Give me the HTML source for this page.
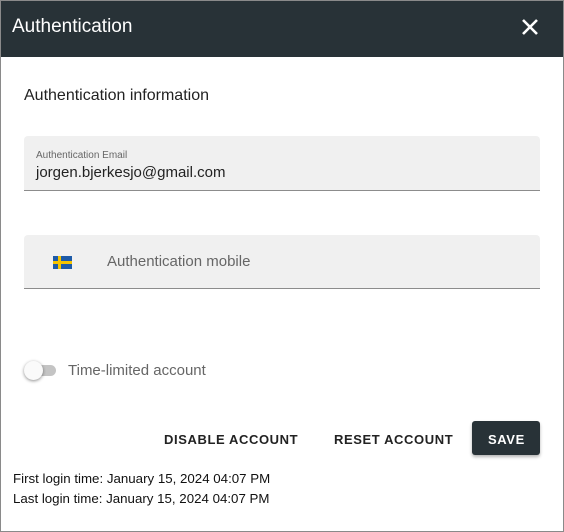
<!DOCTYPE html>
<html><head><style>
body{margin:0;width:564px;height:532px;overflow:hidden;font-family:"Liberation Sans",sans-serif;background:#fff}
.box{position:absolute;left:0;top:0;width:562px;height:530px;border:1px solid #8a8a8a;background:#fff}
.hd{position:absolute;left:0;top:0;width:562px;height:56px;background:#283237;color:#fff}
.hd .t{position:absolute;left:11px;top:15px;font-size:19px}
.x{position:absolute;left:520px;top:17px}
.ab{position:absolute;white-space:nowrap}
.f{position:absolute;left:23px;width:516px;background:#f0f0f0;border-bottom:1px solid #8c8c8c;border-radius:4px 4px 0 0}
.btn{position:absolute;font-size:13px;font-weight:bold;letter-spacing:0.6px;color:#222}
</style></head><body><div class="box">
<div class="hd"><div class="t">Authentication</div>
<svg class="x" width="18" height="18" viewBox="0 0 18 18"><path d="M2 2L16 16M16 2L2 16" stroke="#fff" stroke-width="2.6"/></svg></div>
<div class="ab" style="left:23px;top:86px;font-size:16px;color:#222">Authentication information</div>
<div class="f" style="top:135px;height:54px"></div>
<div class="ab" style="left:35px;top:149px;font-size:10px;color:#666">Authentication Email</div>
<div class="ab" style="left:35px;top:163px;font-size:15px;color:#222">jorgen.bjerkesjo@gmail.com</div>
<div class="f" style="top:234px;height:53px"></div>
<svg class="ab" style="left:52px;top:255px" width="19" height="13"><rect width="19" height="13" fill="#1e5ba8"/><rect x="5" width="3" height="13" fill="#f5c400"/><rect y="5" width="19" height="3" fill="#f5c400"/></svg>
<div class="ab" style="left:106px;top:252px;font-size:15px;color:#666">Authentication mobile</div>
<div class="ab" style="left:27px;top:364px;width:28px;height:11px;border-radius:6px;background:#c4c4c4"></div>
<div class="ab" style="left:23px;top:360px;width:19px;height:19px;border-radius:50%;background:#fafafa;box-shadow:0 1px 3px rgba(0,0,0,.45)"></div>
<div class="ab" style="left:67px;top:361px;font-size:15px;color:#666">Time-limited account</div>
<div class="btn" style="left:163px;top:431px">DISABLE ACCOUNT</div>
<div class="btn" style="left:333px;top:431px">RESET ACCOUNT</div>
<div class="ab" style="left:471px;top:420px;width:68px;height:34px;background:#283237;border-radius:3px;box-shadow:0 2px 3px rgba(0,0,0,.3)"></div>
<div class="btn" style="left:487px;top:431px;color:#fff">SAVE</div>
<div class="ab" style="left:12px;top:470px;font-size:13.3px;color:#111">First login time: January 15, 2024 04:07 PM</div>
<div class="ab" style="left:12px;top:490px;font-size:13.3px;color:#111">Last login time: January 15, 2024 04:07 PM</div>
</div></body></html>
